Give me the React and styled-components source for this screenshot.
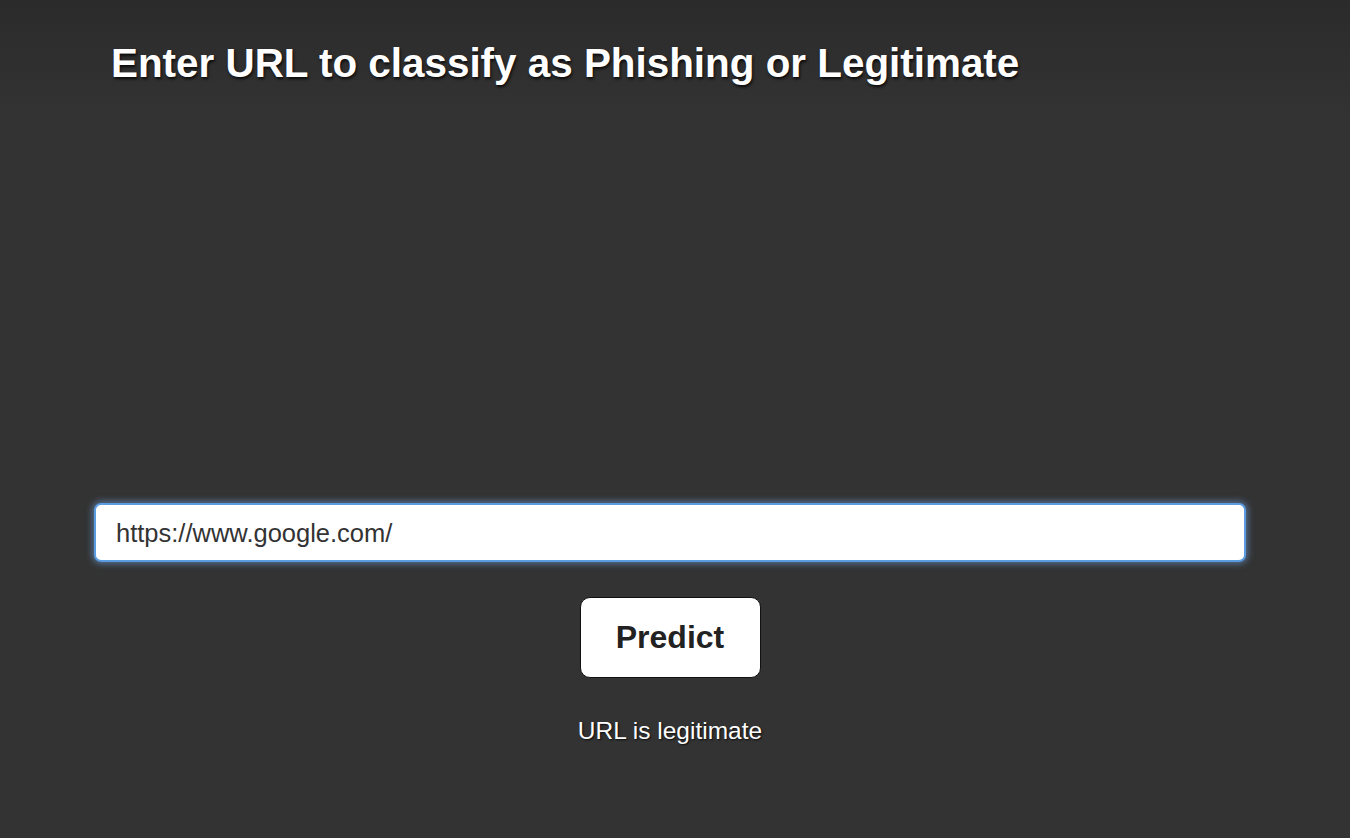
import React from "react";
import styled, { createGlobalStyle } from "styled-components";
import { useState } from "react";

const GlobalStyle = createGlobalStyle`
  html, body {
    margin: 0;
    padding: 0;
    height: 100%;
  }
  body {
    background: linear-gradient(to bottom, #2b2b2b 0px, #333333 120px, #333333 100%);
    font-family: "Liberation Sans", Arial, Helvetica, sans-serif;
    color: #fff;
  }
`;

const Page = styled.div`
  min-height: 838px;
  display: flex;
  flex-direction: column;
  align-items: flex-start;
`;

const Title = styled.h1`
  margin: 40px 0 0 111px;
  font-size: 40.4px;
  font-weight: bold;
  color: #fff;
  text-shadow: 1px 2px 3px rgba(0, 0, 0, 0.8);
`;

const Form = styled.form`
  width: 1152px;
  margin: 416px 0 0 94px;
  display: flex;
  flex-direction: column;
  align-items: center;
`;

const UrlInput = styled.input`
  box-sizing: border-box;
  width: 100%;
  height: 59px;
  padding: 2px 20px 0;
  font-family: "Liberation Sans", Arial, sans-serif;
  font-size: 25.5px;
  color: #333;
  background: #fff;
  border: 2px solid #5b9be0;
  border-radius: 7px;
  box-shadow: 0 0 6px 2px rgba(110, 160, 220, 0.55);
  outline: none;
`;

const Button = styled.button`
  margin-top: 35px;
  width: 181px;
  height: 81px;
  background: #fff;
  border: 1px solid #111;
  border-radius: 10px;
  font-family: "Liberation Sans", Arial, sans-serif;
  font-size: 32px;
  font-weight: bold;
  color: #222;
  cursor: pointer;
`;

const Result = styled.p`
  margin: 39px 0 0;
  font-size: 24.5px;
  color: #fff;
  text-shadow: 1px 1px 2px rgba(0, 0, 0, 0.8);
`;

const App = () => {
  const [url, setUrl] = useState("https://www.google.com/");
  return (
    <>
      <GlobalStyle />
      <Page>
        <Title>Enter URL to classify as Phishing or Legitimate</Title>
        <Form onSubmit={(e) => e.preventDefault()}>
          <UrlInput value={url} onChange={(e) => setUrl(e.target.value)} />
          <Button type="submit">Predict</Button>
          <Result>URL is legitimate</Result>
        </Form>
      </Page>
    </>
  );
};

export default App;
